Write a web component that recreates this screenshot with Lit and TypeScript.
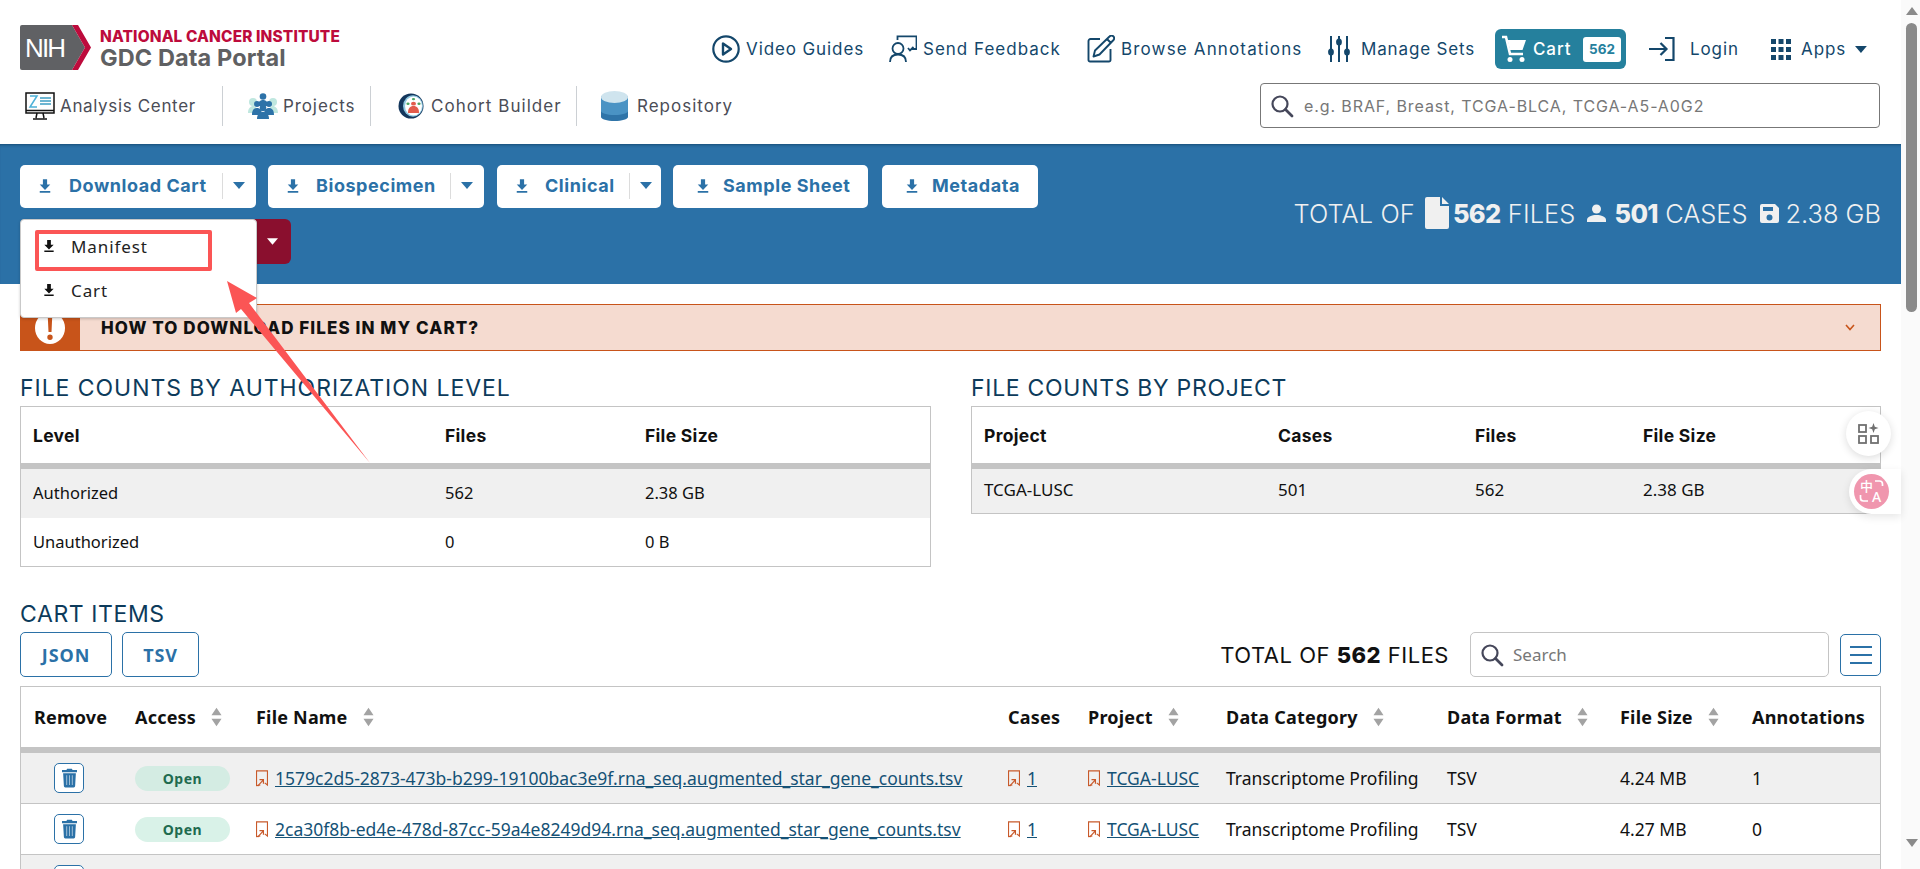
import { LitElement, html, css, svg } from "lit";
import { customElement } from "lit/decorators.js";

const dl = html`<svg class="dl" viewBox="0 0 24 24"><path fill="currentColor" d="M5 21h14v-2.2H5zM19 10h-4.2V3H9.200v7H5l7 7.400z"/></svg>`;
const caret = html`<svg class="caret" viewBox="0 0 12 7"><path fill="currentColor" d="M0 0h12L6 7z"/></svg>`;
const sortI = html`<svg class="sort" viewBox="0 0 12 20"><path fill="#a3a3a3" d="M6 0l5.500 8H.5zM.5 12h11L6 20z"/></svg>`;
const link = html`<svg class="lnk" viewBox="0 0 11 15"><path fill="none" stroke="#c8592a" stroke-width="1" d="M4 13.500L.5 14V.5h10v13L8 11.500"/><path fill="none" stroke="#c8592a" stroke-width="1.100" d="M1.500 14.500L6.500 9M3.200 8.600H6.800V12.200"/></svg>`;
const trash = html`<svg class="trash" viewBox="0 0 16 20"><path fill="currentColor" d="M5.500 0h5l.8 1.500H16v2.300H0V1.500h4.700zM1.200 5h13.600l-.8 13.500a1.500 1.500 0 0 1-1.500 1.500H3.500A1.500 1.500 0 0 1 2 18.500z"/><path stroke="#fff" stroke-opacity=".55" stroke-width="1.100" d="M5 7v10.500M8 7v10.500M11 7v10.500"/></svg>`;
const search = html`<svg class="srch" viewBox="0 0 24 24"><circle cx="10" cy="10" r="7.500" fill="none" stroke="currentColor" stroke-width="2.200"/><path stroke="currentColor" stroke-width="2.800" stroke-linecap="round" d="M15.500 15.500L22 22"/></svg>`;

const topNav = [
  { t: "Video Guides", cls: "w-vg", i: svg`<svg class="ni" viewBox="0 0 28 28"><circle cx="14" cy="14" r="12.700" fill="none" stroke="currentColor" stroke-width="2.200"/><path fill="none" stroke="currentColor" stroke-width="2.400" stroke-linejoin="round" d="M11 8.500v11l8-5.500z"/></svg>` },
  { t: "Send Feedback", cls: "w-sf", i: svg`<svg class="ni" viewBox="0 0 28 28"><g fill="none" stroke="currentColor" stroke-width="1.800"><path d="M8.500 5V1.300H27.500V14H23"/><circle cx="9" cy="13.500" r="5.500"/><path d="M1 27c0-5 3-7.500 8-7.500s8 2.500 8 7.500"/><path d="M19 13l2 2.500 3.500-3.500"/></g></svg>` },
  { t: "Browse Annotations", cls: "w-ba", i: svg`<svg class="ni" viewBox="0 0 28 28"><g fill="none" stroke="currentColor" stroke-width="1.900" stroke-linejoin="round"><path d="M13 4H3.500A2 2 0 0 0 1.500 6v19a1.500 1.500 0 0 0 1.500 1.500h19a1.500 1.500 0 0 0 1.500-1.500V14"/><path d="M6.500 21.500l1.500-6L22.500 1.500a2.300 2.300 0 0 1 4 3.500L12.500 19.500zM20 4l4 4"/></g></svg>` },
  { t: "Manage Sets", cls: "w-ms", i: svg`<svg class="ni nis" viewBox="0 0 22 28"><g stroke="currentColor" stroke-width="2"><path d="M3 1v26M11 1v26M19 1v26"/></g><g fill="currentColor"><ellipse cx="3" cy="17" rx="2.900" ry="3.500"/><ellipse cx="11" cy="7" rx="2.900" ry="3.500"/><ellipse cx="19" cy="17" rx="2.900" ry="3.500"/></g></svg>` },
];

const authRows = [["Authorized", "562", "2.38 GB"], ["Unauthorized", "0", "0 B"]];
const cols = [101, 121, 752, 80, 138, 221, 173, 132, 141];
const heads: [string, boolean][] = [["Remove", false], ["Access", true], ["File Name", true], ["Cases", false], ["Project", true], ["Data Category", true], ["Data Format", true], ["File Size", true], ["Annotations", false]];
const files = [
  ["1579c2d5-2873-473b-b299-19100bac3e9f.rna_seq.augmented_star_gene_counts.tsv", "4.24 MB", "1"],
  ["2ca30f8b-ed4e-478d-87cc-59a4e8249d94.rna_seq.augmented_star_gene_counts.tsv", "4.27 MB", "0"],
];

@customElement("app-root")
export class AppRoot extends LitElement {
  static styles = css`
    :host { display: flex; width: 1920px; height: 869px; overflow: hidden; position: relative; background: #fff; font-family: "Noto Sans", sans-serif; color: #111; }
    * { box-sizing: border-box; }
    .page { width: 1901px; flex: none; }
    .sb { width: 19px; flex: none; background: #fafafa; display: flex; flex-direction: column; align-items: center; padding: 7px 0 0 2px; }
    .sb-up { width: 0; height: 0; border: 6px solid transparent; border-top: 0; border-bottom: 8px solid #8a8a8a; margin-bottom: 8px; }
    .sb-th { width: 11px; height: 289px; background: #8a8a8a; border-radius: 6px; }
    .sb-down { width: 0; height: 0; border: 6px solid transparent; border-bottom: 0; border-top: 8px solid #8a8a8a; margin-top: 527px; }

    .hdr { height: 144px; padding: 25px 21px 0 20px; display: flex; flex-direction: column; }
    .r1 { display: flex; justify-content: space-between; height: 50px; }
    .logo { display: flex; gap: 9px; align-items: flex-start; }
    .logo svg { width: 71px; height: 45px; }
    .lt { display: flex; flex-direction: column; padding-top: 3px; }
    .lt1 { font-family: Inter, sans-serif; font-weight: 800; font-size: 15.400px; line-height: 17px; color: #bd0b3c; letter-spacing: .15px; white-space: nowrap; }
    .lt2 { font-family: Inter, sans-serif; font-weight: 700; font-size: 23.500px; line-height: 27px; color: #5f6062; white-space: nowrap; margin-top: -1px; letter-spacing: .1px; }
    .tn { display: flex; align-items: center; height: 40px; margin: 4px 13px 0 0; color: #14476b; font-family: Inter, sans-serif; font-size: 17px; letter-spacing: .9px; }
    .ti { display: flex; align-items: center; gap: 6px; white-space: nowrap; }
    .ti span { display: block; }
    .ni { width: 28px; height: 28px; flex: none; }
    .nis { width: 22px; }
    .w-vg { width: 177px; } .w-sf { width: 198px; letter-spacing: 1px; } .w-ba { width: 241px; letter-spacing: 1.15px; } .w-ms { width: 167px; gap: 11px; letter-spacing: .85px; }
    .cart { width: 131px; height: 40px; background: #25809d; border-radius: 6px; color: #fff; display: flex; align-items: center; padding: 0 5px 0 6px; margin-right: 23px; gap: 6px; font-weight: 500; }
    .cart svg { width: 26px; height: 28px; flex: none; }
    .badge { margin-left: auto; width: 38px; height: 25px; background: #fff; color: #25809d; font-weight: 700; font-size: 13.500px; border-radius: 3px; display: flex; align-items: center; justify-content: center; letter-spacing: 0; }
    .login { gap: 15px; width: 122px; }
    .login svg { width: 26px; height: 24px; flex: none; }
    .apps { gap: 10px; width: 96px; }
    .apps svg.g { width: 20px; height: 21px; flex: none; }
    .apps .caret { width: 12px; height: 7px; margin-left: -1px; }

    .r2 { display: flex; align-items: center; height: 45px; margin-top: 8px; justify-content: space-between; }
    .mn { display: flex; align-items: center; height: 40px; color: #4b4d57; font-family: Inter, sans-serif; font-size: 17px; letter-spacing: .9px; }
    .mi { display: flex; align-items: center; white-space: nowrap; height: 40px; }
    .mi svg { flex: none; }
    .sep { width: 1px; height: 40px; background: #ccd0d4; flex: none; }
    .m1 { width: 202px; padding-left: 5px; gap: 5px; letter-spacing: .65px; } .m1 svg { width: 30px; height: 28px; }
    .m2 { width: 147px; padding-left: 25px; gap: 5px; } .m2 svg { width: 30px; height: 26px; }
    .m3 { width: 205px; padding-left: 27px; gap: 7px; letter-spacing: 1.05px; } .m3 svg { width: 26px; height: 26px; }
    .m4 { padding-left: 24px; gap: 9px; letter-spacing: 1px; } .m4 svg { width: 27px; height: 30px; }
    .gs { width: 620px; height: 45px; border: 1px solid #777; border-radius: 4px; display: flex; align-items: center; padding-left: 9px; gap: 8px; color: #45475a; }
    .srch { width: 24px; height: 24px; flex: none; }
    .gs input { border: 0; outline: 0; flex: 1; min-width: 0; font-family: Inter, sans-serif; font-size: 16px; letter-spacing: .9px; background: transparent; }
    input::placeholder { color: #777; opacity: 1; }

    .band { height: 140px; background: #2b71a7; padding: 21px 20px 0 20px; display: flex; justify-content: space-between; box-shadow: inset 0 3px 3px -2px rgba(0,40,70,.5); position: relative; }
    .bl { display: flex; flex-direction: column; gap: 11px; }
    .tb { display: flex; gap: 12px; }
    .btn { height: 43px; background: #fff; color: #2b71a7; border-radius: 5px; display: flex; align-items: center; font-family: Inter, sans-serif; font-weight: 700; font-size: 18px; letter-spacing: .55px; white-space: nowrap; padding: 0 0 2px 16px; gap: 14px; }
    .btn .dl { margin-top: 0; }
    .dl { width: 18px; height: 18px; flex: none; }
    .b-dc { width: 236px; gap: 15px; } .b-bs { width: 216px; } .b-cl { width: 164px; margin-left: 1px; } .b-ss { width: 195px; padding-left: 21px; gap: 11px; } .b-md { width: 156px; padding-left: 21px; gap: 11px; margin-left: 2px; }
    .sp { margin-left: auto; height: 26px; width: 34px; border-left: 1px solid #dcdcdc; display: flex; align-items: center; justify-content: center; flex: none; margin-right: 3px; }
    .sp .caret { width: 12px; height: 7px; }
    .dr { width: 271px; height: 45px; background: #8a0f2e; border-radius: 6px; display: flex; align-items: center; justify-content: flex-end; padding-right: 13px; color: #fff; }
    .dr .caret { width: 11px; height: 7px; }
    .tot { display: flex; align-items: center; height: 66px; margin-top: 15px; color: #f0f0f0; font-family: Inter, sans-serif; font-size: 25.400px; font-weight: 300; white-space: nowrap; }
    .tot b { font-weight: 800; letter-spacing: -.6px; }
    .tot svg { flex: none; fill: #f0f0f0; }
    .t-l { letter-spacing: .1px; }
    .t-f { width: 24px; height: 32px; margin: 0 4px 0 10px; }
    .t-p { width: 19px; height: 18px; margin: 0 8px 0 12px; }
    .t-s { width: 19px; height: 19px; margin: 0 7px 0 12px; }

    .main { padding: 20px 20px 0 20px; }
    .alert { height: 47px; background: #f5dbd0; border: 1px solid #c8541a; display: flex; align-items: center; }
    .a-i { width: 60px; height: 47px; margin: -1px 0 -1px -1px; background: #c8541a; display: flex; align-items: center; justify-content: center; flex: none; }
    .a-i svg { width: 30px; height: 32px; }
    .a-t { font-family: Inter, sans-serif; font-weight: 800; font-size: 17px; letter-spacing: 1.07px; padding-left: 21px; color: #111; flex: 1; }
    .a-c { width: 10px; height: 7px; margin-right: 25px; }
    .two { display: flex; justify-content: space-between; margin-top: 23px; }
    .sec { display: flex; flex-direction: column; }
    .s1 { width: 910.600px; } .s2 { width: 910px; }
    h2 { margin: 0; font-family: Inter, sans-serif; font-weight: 400; font-size: 23px; line-height: 28px; color: #0d3b5b; letter-spacing: .95px; white-space: nowrap; }
    .s2 h2 { letter-spacing: .7px; }
    table { border-collapse: separate; border-spacing: 0; width: 100%; table-layout: fixed; border: 1px solid #c4c4c4; font-size: 16.500px; }
    .two table { margin-top: 4px; }
    th { height: 62px; text-align: left; font-family: Inter, sans-serif; font-weight: 700; font-size: 17.500px; letter-spacing: .3px; padding: 0 0 0 12px; border-bottom: 6px solid #c4c4c4; white-space: nowrap; color: #111; }
    td { padding: 0 0 0 12px; white-space: nowrap; }
    .t1 td { height: 48.500px; padding-bottom: 1px; }
    .t2 td { height: 44px; padding-bottom: 4px; font-size: 17px; }
    .alt { background: #f0f0f0; }
    h2.ci { margin: 33px 0 0; letter-spacing: .6px; }
    .ci-bar { display: flex; align-items: center; margin-top: 4px; }
    .ob { height: 45px; border: 1px solid #2b71a7; border-radius: 5px; color: #2b71a7; display: flex; align-items: center; justify-content: center; font-family: "Noto Sans", sans-serif; font-weight: 700; font-size: 18px; letter-spacing: .9px; background: #fff; }
    .o-j { width: 92px; margin-right: 10px; } .o-t { width: 77px; }
    .ct { margin-left: auto; font-family: Inter, sans-serif; font-size: 22px; font-weight: 400; letter-spacing: .5px; color: #111; white-space: nowrap; margin-right: 21px; }
    .ct b { font-weight: 800; }
    .ls { width: 359px; height: 45px; border: 1px solid #c4c4c4; border-radius: 5px; display: flex; align-items: center; gap: 7px; padding-left: 9px; color: #45475a; margin-right: 11px; }
    .ls input { border: 0; outline: 0; font-family: "Noto Sans", sans-serif; font-size: 17px; background: transparent; flex: 1; min-width: 0; }
    .mb { width: 41px; height: 42px; border: 1px solid #2b71a7; border-radius: 5px; display: flex; flex-direction: column; justify-content: center; align-items: center; gap: 6px; }
    .mb i { display: block; width: 22px; height: 2px; background: #2b71a7; }
    .wrap { margin-top: 9px; height: 200px; overflow: hidden; }
    .ft th { height: 66px; font-family: "Noto Sans", sans-serif; font-size: 18px; letter-spacing: .2px; padding-left: 13px; }
    .ft td { height: 51px; border-bottom: 1px solid #c4c4c4; padding-left: 13px; color: #111; font-size: 17.500px; }
    .hc { display: flex; align-items: center; gap: 15px; }
    .sort { width: 11px; height: 20px; flex: none; }
    .tb-b { width: 30px; height: 30px; border: 1px solid #2b71a7; border-radius: 5px; display: flex; align-items: center; justify-content: center; color: #2b71a7; background: #fff; margin-left: 20px; }
    .trash { width: 15px; height: 20px; }
    .pill { width: 95px; height: 25px; border-radius: 13px; background: #d4ece3; color: #1f6b4f; font-weight: 700; font-size: 14px; display: flex; align-items: center; justify-content: center; letter-spacing: .5px; }
    .white .pill { background: #d9f2e8; }
    .lc { display: flex; align-items: center; gap: 7px; }
    .lnk { width: 12px; height: 17px; flex: none; }
    a { color: #155276; text-decoration: underline; }

    .menu { position: absolute; left: 20px; top: 219px; width: 237px; height: 99px; background: #fff; border: 1px solid #c9c9c9; border-radius: 4px; box-shadow: 0 1px 3px rgba(0,0,0,.2); display: flex; flex-direction: column; padding: 4px 0 2px; color: #222; font-size: 17px; letter-spacing: .9px; }
    .mitem { height: 44px; display: flex; align-items: center; gap: 14px; padding-left: 20px; }
    .mitem .dl { width: 16px; height: 16px; color: #111; }
    .mark { position: absolute; left: 35px; top: 230px; width: 177px; height: 41px; border: 4px solid #fb5555; border-radius: 2px; }
    .arrow { position: absolute; left: 0; top: 0; width: 500px; height: 500px; }
    .fab1 { position: absolute; left: 1846px; top: 411px; width: 45px; height: 45px; border-radius: 50%; background: #fff; box-shadow: 0 2px 8px rgba(0,0,0,.14); display: flex; align-items: center; justify-content: center; }
    .fab1 svg { width: 21px; height: 21px; }
    .fab2 { position: absolute; left: 1849px; top: 469px; width: 52px; height: 45px; border-radius: 23px 0 0 23px; background: #fff; box-shadow: 0 3px 8px rgba(0,0,0,.1); display: flex; align-items: center; padding-left: 5px; }
    .tr { width: 35px; height: 35px; border-radius: 50%; background: #f096ae; color: #fff; position: relative; font-family: "Noto Sans CJK SC", "Noto Sans", sans-serif; }
    .tr svg { position: absolute; left: 0; top: 0; width: 35px; height: 35px; }
    .tr .z { position: absolute; left: 6px; top: 4px; font-size: 13px; line-height: 15px; font-weight: 500; }
    .tr .a { position: absolute; left: 18px; top: 15px; font-size: 14px; line-height: 15px; font-weight: 500; font-family: "Noto Sans", sans-serif; }
  `;

  render() {
    return html`
      <div class="page">
        <header class="hdr">
          <div class="r1">
            <div class="logo">
              <svg viewBox="0 0 71 45"><path fill="#606164" d="M2 0h50l13 22.500L52 45H2a2 2 0 0 1-2-2V2a2 2 0 0 1 2-2z"/><path fill="#bd0b3c" d="M52 0h6l13 22.500L58 45h-6l13-22.500z"/><text x="5" y="32" font-family="Liberation Sans, sans-serif" font-size="26" fill="#fff" textLength="41">NIH</text></svg>
              <div class="lt"><div class="lt1">NATIONAL CANCER INSTITUTE</div><div class="lt2">GDC Data Portal</div></div>
            </div>
            <nav class="tn">
              ${topNav.map((n) => html`<div class="ti ${n.cls}">${n.i}<span>${n.t}</span></div>`)}
              <div class="cart">
                <svg viewBox="0 0 26 28"><path fill="none" stroke="#fff" stroke-width="2.600" d="M1 2h4l4 17h13"/><path fill="#fff" d="M6.500 5H25l-3.500 10H9z"/><circle cx="9" cy="24.500" r="2.500" fill="#fff"/><circle cx="21" cy="24.500" r="2.500" fill="#fff"/></svg>
                <span>Cart</span><div class="badge">562</div>
              </div>
              <div class="ti login">
                <svg viewBox="0 0 26 24"><path fill="none" stroke="currentColor" stroke-width="2.200" d="M16 1h8.500v22H16M0 12h17M11.500 6l6 6-6 6"/></svg><span>Login</span>
              </div>
              <div class="ti apps">
                <svg class="g" viewBox="0 0 20 21"><path fill="currentColor" d="M0 0h5v5H0zM7.500 0h5v5h-5zM15 0h5v5h-5zM0 8h5v5H0zM7.500 8h5v5h-5zM15 8h5v5h-5zM0 16h5v5H0zM7.500 16h5v5h-5zM15 16h5v5h-5z"/></svg>
                <span>Apps</span>${caret}
              </div>
            </nav>
          </div>
          <div class="r2">
            <div class="mn">
              <div class="mi m1">
                <svg viewBox="0 0 30 28"><rect x="1" y="1" width="28" height="20" fill="#fff" stroke="#111" stroke-width="1.500"/><path d="M1 18.500h28" stroke="#111" stroke-width="1.500"/><path fill="none" stroke="#4db1d8" stroke-width="1.500" d="M5 4h7L5 15h7M5 15l7-11"/><path stroke="#3f9ec4" stroke-width="1.300" d="M15 6h11M15 9h11M15 12h11"/><path stroke="#111" stroke-width="1.500" fill="none" d="M12 21l-1 5M18 21l1 5M8 27h14"/></svg>
                <span>Analysis Center</span>
              </div>
              <div class="sep"></div>
              <div class="mi m2">
                <svg viewBox="0 0 30 26"><g fill="#bfe7df"><circle cx="5" cy="9" r="4"/><circle cx="25" cy="9" r="4"/><path d="M0 20c0-5 3-7 5-7s5 2 5 7zM20 20c0-5 3-7 5-7s5 2 5 7z"/></g><g fill="#2d72a8"><circle cx="15" cy="3.500" r="3.300"/><path d="M10 13c0-4 2-6 5-6s5 2 5 6z"/><circle cx="9" cy="11" r="3"/><circle cx="21" cy="11" r="3"/><path d="M4 22c0-5 2-7 5-7s5 2 5 7zM16 22c0-5 2-7 5-7s5 2 5 7z"/><circle cx="15" cy="15" r="3.300"/><path d="M9 26c0-5 3-7 6-7s6 2 6 7z"/></g></svg>
                <span>Projects</span>
              </div>
              <div class="sep"></div>
              <div class="mi m3">
                <svg viewBox="0 0 26 34" preserveAspectRatio="none"><ellipse cx="13" cy="17" rx="12.500" ry="16.500" fill="#13365c"/><ellipse cx="15" cy="17" rx="10" ry="14" fill="#8fc7e0"/><ellipse cx="15.500" cy="17" rx="8.500" ry="12.500" fill="#fff"/><circle cx="15.500" cy="14" r="2.500" fill="#e25b4b"/><path d="M10 26c0-6 2-9 5.500-9s5.500 3 5.500 9z" fill="#e25b4b"/><g fill="#4aa563"><circle cx="10" cy="14" r="1.600"/><circle cx="21" cy="14" r="1.600"/><circle cx="15.500" cy="8" r="1.600"/></g></svg>
                <span>Cohort Builder</span>
              </div>
              <div class="sep"></div>
              <div class="mi m4">
                <svg viewBox="0 0 27 30"><path fill="#2f74a8" d="M0 20h27v6c0 2-6 4-13.500 4S0 28 0 26z"/><path fill="#4a93c4" d="M0 11h27v9c0 2-6 4-13.500 4S0 22 0 20z"/><path fill="#4a93c4" d="M0 5h27v8H0z"/><ellipse cx="13.500" cy="6" rx="13.500" ry="6" fill="#cfe4ee"/></svg>
                <span>Repository</span>
              </div>
            </div>
            <label class="gs">${search}<input placeholder="e.g. BRAF, Breast, TCGA-BLCA, TCGA-A5-A0G2" /></label>
          </div>
        </header>

        <section class="band">
          <div class="bl">
            <div class="tb">
              <div class="btn b-dc">${dl}<span>Download Cart</span><div class="sp">${caret}</div></div>
              <div class="btn b-bs">${dl}<span>Biospecimen</span><div class="sp">${caret}</div></div>
              <div class="btn b-cl">${dl}<span>Clinical</span><div class="sp">${caret}</div></div>
              <div class="btn b-ss">${dl}<span>Sample Sheet</span></div>
              <div class="btn b-md">${dl}<span>Metadata</span></div>
            </div>
            <div class="dr">${caret}</div>
          </div>
          <div class="tot">
            <span class="t-l">TOTAL OF</span>
            <svg class="t-f" viewBox="0 0 24 32"><path d="M2 0h13v9h9v21a2 2 0 0 1-2 2H2a2 2 0 0 1-2-2V2a2 2 0 0 1 2-2zM17 0l7 7h-7z"/></svg>
            <b>562</b><span class="t-l">&nbsp;FILES</span>
            <svg class="t-p" viewBox="0 0 19 18"><circle cx="9.500" cy="5" r="4.500"/><path d="M0 18v-2c0-3.500 5-5 9.500-5s9.500 1.500 9.500 5v2z"/></svg>
            <b>501</b><span>&nbsp;CASES</span>
            <svg class="t-s" viewBox="0 0 19 19"><path fill-rule="evenodd" d="M2 0h13l4 4v13a2 2 0 0 1-2 2H2a2 2 0 0 1-2-2V2a2 2 0 0 1 2-2zm1 3v4h10V3zm6.500 7.500a3 3 0 1 0 0 6 3 3 0 0 0 0-6z"/></svg>
            <span>2.38 GB</span>
          </div>
        </section>

        <main class="main">
          <div class="alert">
            <div class="a-i"><svg viewBox="0 0 30 32"><ellipse cx="15" cy="16" rx="15" ry="16" fill="#fff"/><path fill="#c8541a" d="M12.800 5h4.400l-.7 15h-3zM15 22.500a2.700 2.700 0 1 1 0 5.400 2.700 2.700 0 0 1 0-5.400z"/></svg></div>
            <div class="a-t">HOW TO DOWNLOAD FILES IN MY CART?</div>
            <svg class="a-c" viewBox="0 0 10 7"><path fill="none" stroke="#c8541a" stroke-width="1.600" d="M1 1l4 4.500L9 1"/></svg>
          </div>
          <div class="two">
            <section class="sec s1">
              <h2>FILE COUNTS BY AUTHORIZATION LEVEL</h2>
              <table class="t1">
                <colgroup>${[412, 200, 297].map((w) => html`<col style="width:${w}px" />`)}</colgroup>
                <thead><tr><th>Level</th><th>Files</th><th>File Size</th></tr></thead>
                <tbody>${authRows.map((r, i) => html`<tr class=${i === 0 ? "alt" : ""}>${r.map((c) => html`<td>${c}</td>`)}</tr>`)}</tbody>
              </table>
            </section>
            <section class="sec s2">
              <h2>FILE COUNTS BY PROJECT</h2>
              <table class="t2">
                <colgroup>${[294, 197, 168, 249].map((w) => html`<col style="width:${w}px" />`)}</colgroup>
                <thead><tr><th>Project</th><th>Cases</th><th>Files</th><th>File Size</th></tr></thead>
                <tbody><tr class="alt"><td>TCGA-LUSC</td><td>501</td><td>562</td><td>2.38 GB</td></tr></tbody>
              </table>
            </section>
          </div>
          <h2 class="ci">CART ITEMS</h2>
          <div class="ci-bar">
            <div class="ob o-j">JSON</div><div class="ob o-t">TSV</div>
            <div class="ct">TOTAL OF <b>562</b> FILES</div>
            <label class="ls">${search}<input placeholder="Search" /></label>
            <div class="mb"><i></i><i></i><i></i></div>
          </div>
          <div class="wrap">
            <table class="ft">
              <colgroup>${cols.map((w) => html`<col style="width:${w}px" />`)}</colgroup>
              <thead><tr>${heads.map(([h, s]) => html`<th><div class="hc"><span>${h}</span>${s ? sortI : ""}</div></th>`)}</tr></thead>
              <tbody>
                ${files.map((f, i) => html`<tr class=${i % 2 === 0 ? "alt" : "white"}>
                  <td><div class="tb-b">${trash}</div></td>
                  <td><div class="pill">Open</div></td>
                  <td><div class="lc">${link}<a>${f[0]}</a></div></td>
                  <td><div class="lc">${link}<a>1</a></div></td>
                  <td><div class="lc">${link}<a>TCGA-LUSC</a></div></td>
                  <td>Transcriptome Profiling</td>
                  <td>TSV</td>
                  <td>${f[1]}</td>
                  <td>${f[2]}</td>
                </tr>`)}
                <tr class="alt"><td><div class="tb-b">${trash}</div></td><td colspan="8"></td></tr>
              </tbody>
            </table>
          </div>
        </main>
      </div>
      <aside class="sb"><div class="sb-up"></div><div class="sb-th"></div><div class="sb-down"></div></aside>

      <div class="menu">
        <div class="mitem">${dl}<span>Manifest</span></div>
        <div class="mitem">${dl}<span>Cart</span></div>
      </div>
      <div class="mark"></div>
      <svg class="arrow" viewBox="0 0 500 500"><path fill="#fb5555" d="M227 281L257 298 249 303 370 463 241 309 236 313z"/></svg>
      <div class="fab1"><svg viewBox="0 0 21 21"><g fill="none" stroke="#707070" stroke-width="1.800"><rect x="1" y="2" width="7" height="7"/><rect x="1" y="13" width="7" height="7"/><rect x="13" y="13" width="7" height="7"/></g><path fill="#707070" d="M15.500 0l1.300 3.700 3.700 1.300-3.700 1.300-1.300 3.700-1.300-3.700L10.500 5l3.700-1.300z"/></svg></div>
      <div class="fab2"><div class="tr"><svg viewBox="0 0 35 35"><path fill="none" stroke="#fff" stroke-width="1.700" d="M21 7h4.500a3 3 0 0 1 3 3v2M6.500 21v3a3 3 0 0 0 3 3H14"/></svg><span class="z">中</span><span class="a">A</span></div></div>
    `;
  }
}
